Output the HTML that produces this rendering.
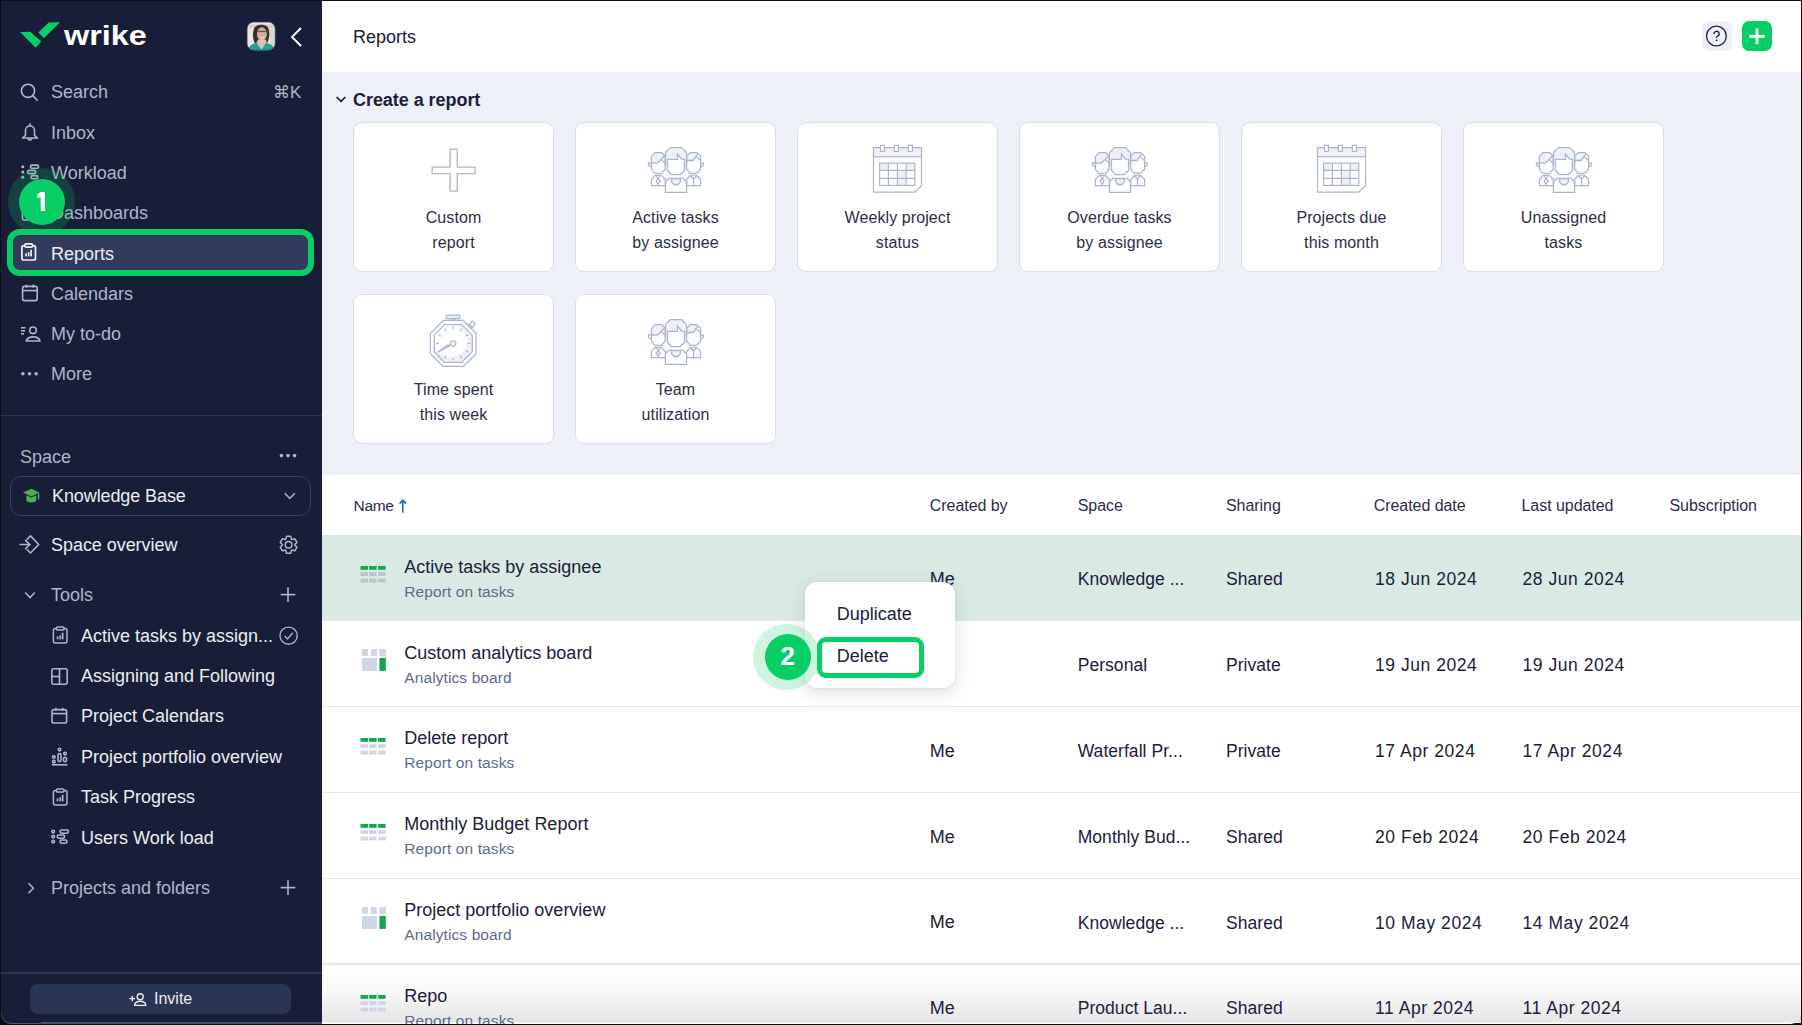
<!DOCTYPE html><html><head><meta charset="utf-8"><style>*{box-sizing:border-box;margin:0;padding:0}html,body{width:1802px;height:1025px;overflow:hidden;background:#0e0e10;font-family:"Liberation Sans",sans-serif}.t{position:absolute;white-space:nowrap}svg{display:block;overflow:visible}</style></head><body>
<div style="position:absolute;left:0px;top:0px;width:1802px;height:1025px;background:#0e0e10"></div>
<div style="position:absolute;left:1px;top:1px;width:321px;height:1023px;background:#181e37;border-bottom-left-radius:10px"></div>
<div style="position:absolute;left:322px;top:1px;width:1479px;height:1023px;background:#fff;border-bottom-right-radius:10px"></div>
<div style="position:absolute;left:1px;top:1013px;width:40px;height:11px;border-left:1px solid rgba(110,120,150,0.35);border-bottom:1.5px solid rgba(120,130,160,0.55);border-bottom-left-radius:10px"></div>
<div style="position:absolute;left:41px;top:1022px;width:281px;height:1.5px;background:rgba(120,130,160,0.5)"></div>
<div style="position:absolute;left:322px;top:72px;width:1479px;height:403px;background:#edf0f7"></div>
<svg style="position:absolute;left:18px;top:20px;" width="44" height="30" viewBox="18 20 44 30"><polygon points="20,32.1 30,31.7 41.2,41.5 35.4,47.5" fill="#08cf65"/><polygon points="38.3,32.5 48.7,22.5 60,22.3 44.1,38.3" fill="#08cf65"/><polygon points="30,31.7 41.2,41.5 35.4,47.5" fill="#08cf65"/></svg>
<div class="t" style="left:63.5px;top:18.54px;font-size:27px;line-height:34px;color:#ffffff;font-weight:700;transform:scaleX(1.2);transform-origin:0 0;">wrike</div>
<svg style="position:absolute;left:244px;top:19px;" width="34" height="34" viewBox="0 0 1025 1025"><defs><clipPath id="avc"><rect x="92" y="92" width="848" height="848" rx="200"/></clipPath></defs><g clip-path="url(#avc)"><rect x="0" y="0" width="1025" height="1025" fill="#e9e8e4"/><rect x="150" y="170" width="780" height="110" fill="#d8d0c0"/><rect x="780" y="300" width="120" height="560" fill="#d9d6d0"/><path d="M300 300 C330 140 700 120 740 300 C790 420 760 600 700 720 L330 740 C260 600 250 420 300 300 Z" fill="#3a2f2b"/><ellipse cx="540" cy="450" rx="150" ry="200" fill="#d4b09a"/><rect x="400" y="355" width="270" height="40" fill="#4a3d38" opacity="0.8"/><path d="M470 530 Q545 580 620 530 L610 560 Q545 600 480 560 Z" fill="#f3ece6"/><path d="M420 620 L660 620 L700 760 L540 930 L360 760 Z" fill="#dcbfae"/><path d="M120 1025 L150 860 C200 760 330 720 380 720 L530 930 L660 720 C760 730 880 780 920 900 L940 1025 Z" fill="#17a896"/></g><rect x="92" y="92" width="848" height="848" rx="200" fill="none" stroke="#33405e" stroke-width="22"/></svg>
<svg style="position:absolute;left:288px;top:26px;" width="16" height="22" viewBox="0 0 16 22"><polyline points="13,2 4,11 13,20" fill="none" stroke="#fff" stroke-width="2"/></svg>
<div style="position:absolute;left:8px;top:230px;width:306px;height:46px;background:#323b5c;border-radius:12px"></div>
<div class="t" style="left:51px;top:80.96px;font-size:18px;line-height:22px;color:#aeb6cb;">Search</div>
<div class="t" style="left:51px;top:121.66px;font-size:18px;line-height:22px;color:#aeb6cb;">Inbox</div>
<div class="t" style="left:51px;top:161.66px;font-size:18px;line-height:22px;color:#aeb6cb;">Workload</div>
<div class="t" style="left:51px;top:201.86px;font-size:18px;line-height:22px;color:#aeb6cb;">Dashboards</div>
<div class="t" style="left:51px;top:242.76px;font-size:18px;line-height:22px;color:#eceef3;">Reports</div>
<div class="t" style="left:51px;top:282.86px;font-size:18px;line-height:22px;color:#aeb6cb;">Calendars</div>
<div class="t" style="left:51px;top:323.36px;font-size:18px;line-height:22px;color:#aeb6cb;">My to-do</div>
<div class="t" style="left:51px;top:363.46px;font-size:18px;line-height:22px;color:#aeb6cb;">More</div>
<div class="t" style="left:273px;top:81.81px;font-size:17px;line-height:21px;color:#aeb6cb;">&#8984;K</div>
<svg style="position:absolute;left:16px;top:80px;" width="26" height="26" viewBox="16 80 26 26"><circle cx="28" cy="90.8" r="6.6" fill="none" stroke="#aeb6cb" stroke-width="1.6"/><line x1="32.8" y1="95.6" x2="37.3" y2="100.2" fill="none" stroke="#aeb6cb" stroke-width="1.6" stroke-linecap="round"/></svg>
<svg style="position:absolute;left:16px;top:118px;" width="28" height="28" viewBox="16 118 28 28"><path d="M30 125.9 a4.5 4.5 0 0 1 4.5 4.5 v4.9 l3 2.7 h-15 l3 -2.7 v-4.9 a4.5 4.5 0 0 1 4.5 -4.5 z M30 123.3 v2.6 M28.2 138.3 a1.8 1.7 0 0 0 3.6 0" fill="none" stroke="#aeb6cb" stroke-width="1.6" stroke-linejoin="round"/></svg>
<svg style="position:absolute;left:18px;top:160px;" width="26" height="24" viewBox="18 160 26 24"><circle cx="22.8" cy="166.7" r="1.5" fill="#aeb6cb"/><circle cx="22.8" cy="172" r="1.5" fill="#aeb6cb"/><circle cx="22.8" cy="177.2" r="1.5" fill="#aeb6cb"/><rect x="30.4" y="165.1" width="8.2" height="3.2" rx="1.6" fill="none" stroke="#aeb6cb" stroke-width="1.6" stroke-width="1.3"/><rect x="27.5" y="170.4" width="8.2" height="3.2" rx="1.6" fill="none" stroke="#aeb6cb" stroke-width="1.6" stroke-width="1.3"/><rect x="31" y="175.6" width="6.8" height="3.2" rx="1.6" fill="none" stroke="#aeb6cb" stroke-width="1.6" stroke-width="1.3"/></svg>
<svg style="position:absolute;left:18px;top:200px;" width="24" height="24" viewBox="18 200 24 24"><rect x="22.5" y="205" width="15" height="15" rx="1.5" fill="none" stroke="#aeb6cb" stroke-width="1.6"/><line x1="30" y1="205" x2="30" y2="220" fill="none" stroke="#aeb6cb" stroke-width="1.6"/><line x1="22.5" y1="212" x2="30" y2="212" fill="none" stroke="#aeb6cb" stroke-width="1.6"/></svg>
<svg style="position:absolute;left:21px;top:243px;" width="16" height="19" viewBox="0 0 16 19"><rect x="0.9" y="2.6" width="13.6" height="14.4" rx="2" fill="none" stroke="#f0f1f5" stroke-width="1.7"/><rect x="3.9" y="0.9" width="7.6" height="3.2" rx="1.2" fill="#323b5c" fill="none" stroke="#f0f1f5" stroke-width="1.7"/><rect x="4.2" y="10.4" width="1.7" height="3.0" fill="#f0f1f5"/><rect x="6.9" y="9.2" width="1.5" height="4.2" fill="#f0f1f5"/><rect x="9.2" y="6.8" width="1.8" height="6.6" fill="#f0f1f5"/></svg>
<svg style="position:absolute;left:20px;top:283px;" width="20" height="20" viewBox="20 283 20 20"><rect x="22.6" y="286.4" width="14.6" height="14.2" rx="1.8" fill="none" stroke="#aeb6cb" stroke-width="1.6"/><line x1="22.6" y1="290.6" x2="37.2" y2="290.6" fill="none" stroke="#aeb6cb" stroke-width="1.6"/><line x1="26.5" y1="284.6" x2="26.5" y2="287.6" fill="none" stroke="#aeb6cb" stroke-width="1.6"/><line x1="33.3" y1="284.6" x2="33.3" y2="287.6" fill="none" stroke="#aeb6cb" stroke-width="1.6"/></svg>
<svg style="position:absolute;left:19px;top:324px;" width="24" height="20" viewBox="19 324 24 20"><circle cx="33" cy="330.3" r="3.3" fill="none" stroke="#aeb6cb" stroke-width="1.6"/><path d="M26.2 341 a7 5 0 0 1 13.8 0 z" fill="none" stroke="#aeb6cb" stroke-width="1.6" stroke-linejoin="round"/><line x1="21" y1="327.8" x2="25.5" y2="327.8" fill="none" stroke="#aeb6cb" stroke-width="1.6" stroke-width="1.4"/><line x1="21" y1="330.8" x2="25" y2="330.8" fill="none" stroke="#aeb6cb" stroke-width="1.6" stroke-width="1.4"/><line x1="21" y1="333.8" x2="24" y2="333.8" fill="none" stroke="#aeb6cb" stroke-width="1.6" stroke-width="1.4"/></svg>
<svg style="position:absolute;left:19px;top:370px;" width="22" height="8" viewBox="19 370 22 8"><circle cx="22.9" cy="373.8" r="1.8" fill="#aeb6cb"/><circle cx="29.5" cy="373.8" r="1.8" fill="#aeb6cb"/><circle cx="36.1" cy="373.8" r="1.8" fill="#aeb6cb"/></svg>
<div style="position:absolute;left:1px;top:415px;width:321px;height:1px;background:#2c3552"></div>
<div class="t" style="left:20px;top:445.56px;font-size:18px;line-height:22px;color:#aeb6cb;">Space</div>
<svg style="position:absolute;left:277px;top:451px;" width="22" height="9" viewBox="277 451 22 9"><circle cx="281.5" cy="455.6" r="1.8" fill="#aeb6cb"/><circle cx="288" cy="455.6" r="1.8" fill="#aeb6cb"/><circle cx="294.5" cy="455.6" r="1.8" fill="#aeb6cb"/></svg>
<div style="position:absolute;left:10px;top:476px;width:301px;height:40px;border:1px solid #36405f;border-radius:11px"></div>
<svg style="position:absolute;left:22px;top:487px;" width="20" height="18" viewBox="22 487 20 18"><path d="M31.3 488.8 L39.5 492.6 L31.3 496.4 L23 492.6 Z" fill="#4caf50"/><path d="M26.3 495.2 v4.6 a5 2.6 0 0 0 10 0 v-4.6 l-5 2.4 z" fill="#4caf50"/><rect x="37.8" y="493.5" width="1.5" height="5.8" fill="#4caf50"/></svg>
<div class="t" style="left:52px;top:484.96px;font-size:18px;line-height:22px;color:#eceef3;letter-spacing:-0.1px;">Knowledge Base</div>
<svg style="position:absolute;left:282px;top:490px;" width="16" height="12" viewBox="282 490 16 12"><polyline points="284.8,493.2 289.8,498.4 294.8,493.2" fill="none" stroke="#aeb6cb" stroke-width="1.5"/></svg>
<svg style="position:absolute;left:18px;top:533px;" width="24" height="24" viewBox="18 533 24 24"><polyline points="27.3,539.1 30.5,535.9 38.8,544.5 30.5,553 27.3,549.8" fill="none" stroke="#aeb6cb" stroke-width="1.6" stroke-linejoin="round" stroke-linecap="round"/><line x1="20.1" y1="544.5" x2="29.6" y2="544.5" fill="none" stroke="#aeb6cb" stroke-width="1.6" stroke-linecap="round"/><polyline points="25.6,540.4 29.8,544.5 25.6,548.6" fill="none" stroke="#aeb6cb" stroke-width="1.6" stroke-linecap="round"/></svg>
<div class="t" style="left:51px;top:533.86px;font-size:18px;line-height:22px;color:#eceef3;letter-spacing:-0.05px;">Space overview</div>
<svg style="position:absolute;left:276px;top:532px;" width="26" height="26" viewBox="276 532 26 26"><polygon points="285.69,539.33 286.50,536.36 290.70,536.36 291.51,539.33 291.89,539.54 294.86,538.76 296.96,542.40 294.80,544.58 294.80,545.02 296.96,547.20 294.86,550.84 291.89,550.06 291.51,550.27 290.70,553.24 286.50,553.24 285.69,550.27 285.31,550.06 282.34,550.84 280.24,547.20 282.40,545.02 282.40,544.58 280.24,542.40 282.34,538.76 285.31,539.54" fill="none" stroke="#aeb6cb" stroke-width="1.5" stroke-linejoin="round"/><circle cx="288.6" cy="544.8" r="3.3" fill="none" stroke="#aeb6cb" stroke-width="1.5"/></svg>
<svg style="position:absolute;left:22px;top:588px;" width="16" height="14" viewBox="22 588 16 14"><polyline points="25.2,592.6 30,597.6 34.8,592.6" fill="none" stroke="#aeb6cb" stroke-width="1.5"/></svg>
<div class="t" style="left:51px;top:584.46px;font-size:18px;line-height:22px;color:#aeb6cb;">Tools</div>
<svg style="position:absolute;left:276px;top:582px;" width="26" height="26" viewBox="276 582 26 26"><line x1="280.7" y1="594.6" x2="295.3" y2="594.6" stroke="#aeb6cb" stroke-width="1.6"/><line x1="288" y1="587.3000000000001" x2="288" y2="601.9" stroke="#aeb6cb" stroke-width="1.6"/></svg>
<div class="t" style="left:81px;top:624.56px;font-size:18px;line-height:22px;color:#eceef3;">Active tasks by assign...</div>
<div class="t" style="left:81px;top:664.96px;font-size:18px;line-height:22px;color:#eceef3;">Assigning and Following</div>
<div class="t" style="left:81px;top:705.36px;font-size:18px;line-height:22px;color:#eceef3;">Project Calendars</div>
<div class="t" style="left:81px;top:745.66px;font-size:18px;line-height:22px;color:#eceef3;">Project portfolio overview</div>
<div class="t" style="left:81px;top:786.06px;font-size:18px;line-height:22px;color:#eceef3;">Task Progress</div>
<div class="t" style="left:81px;top:826.56px;font-size:18px;line-height:22px;color:#eceef3;">Users Work load</div>
<svg style="position:absolute;left:51.5px;top:626px;" width="17" height="19" viewBox="0 0 16 19"><rect x="0.9" y="2.6" width="13.6" height="14.4" rx="2" fill="none" stroke="#aeb6cb" stroke-width="1.5"/><rect x="3.9" y="0.9" width="7.6" height="3.2" rx="1.2" fill="#181e37" fill="none" stroke="#aeb6cb" stroke-width="1.5"/><rect x="4.2" y="10.4" width="1.7" height="3.0" fill="#aeb6cb"/><rect x="6.9" y="9.2" width="1.5" height="4.2" fill="#aeb6cb"/><rect x="9.2" y="6.8" width="1.8" height="6.6" fill="#aeb6cb"/></svg>
<svg style="position:absolute;left:50px;top:667px;" width="19" height="19" viewBox="50 667 19 19"><rect x="51.8" y="668.8" width="15.4" height="15.4" rx="1.6" fill="none" stroke="#aeb6cb" stroke-width="1.6"/><line x1="59.5" y1="668.8" x2="59.5" y2="684.2" fill="none" stroke="#aeb6cb" stroke-width="1.6"/><line x1="51.8" y1="676.5" x2="59.5" y2="676.5" fill="none" stroke="#aeb6cb" stroke-width="1.6"/></svg>
<svg style="position:absolute;left:50px;top:707px;" width="19" height="19" viewBox="50 707 19 19"><rect x="52" y="709.6" width="14.6" height="13.4" rx="1.8" fill="none" stroke="#aeb6cb" stroke-width="1.6"/><line x1="52" y1="713.6" x2="66.6" y2="713.6" fill="none" stroke="#aeb6cb" stroke-width="1.6"/><line x1="55.9" y1="707.8" x2="55.9" y2="710.8" fill="none" stroke="#aeb6cb" stroke-width="1.6"/><line x1="62.7" y1="707.8" x2="62.7" y2="710.8" fill="none" stroke="#aeb6cb" stroke-width="1.6"/></svg>
<svg style="position:absolute;left:50px;top:747px;" width="19" height="19" viewBox="50 747 19 19"><circle cx="53.8" cy="757" r="1.3" fill="none" stroke="#aeb6cb" stroke-width="1.6" stroke-width="1.2"/><circle cx="53.8" cy="761.6" r="1.3" fill="none" stroke="#aeb6cb" stroke-width="1.6" stroke-width="1.2"/><circle cx="59.5" cy="749.6" r="1.3" fill="none" stroke="#aeb6cb" stroke-width="1.6" stroke-width="1.2"/><rect x="58" y="753.6" width="3" height="8" rx="1.5" fill="none" stroke="#aeb6cb" stroke-width="1.6" stroke-width="1.2"/><circle cx="65" cy="753.6" r="1.3" fill="none" stroke="#aeb6cb" stroke-width="1.6" stroke-width="1.2"/><rect x="63.5" y="757.2" width="3" height="4.6" rx="1.5" fill="none" stroke="#aeb6cb" stroke-width="1.6" stroke-width="1.2"/><line x1="51.8" y1="764.8" x2="67.5" y2="764.8" fill="none" stroke="#aeb6cb" stroke-width="1.6" stroke-width="1.3"/></svg>
<svg style="position:absolute;left:51.5px;top:788px;" width="17" height="19" viewBox="0 0 16 19"><rect x="0.9" y="2.6" width="13.6" height="14.4" rx="2" fill="none" stroke="#aeb6cb" stroke-width="1.5"/><rect x="3.9" y="0.9" width="7.6" height="3.2" rx="1.2" fill="#181e37" fill="none" stroke="#aeb6cb" stroke-width="1.5"/><rect x="4.2" y="10.4" width="1.7" height="3.0" fill="#aeb6cb"/><rect x="6.9" y="9.2" width="1.5" height="4.2" fill="#aeb6cb"/><rect x="9.2" y="6.8" width="1.8" height="6.6" fill="#aeb6cb"/></svg>
<svg style="position:absolute;left:50px;top:828px;" width="22" height="20" viewBox="49 827 22 20"><circle cx="52.2" cy="830.6" r="1.3" fill="none" stroke="#aeb6cb" stroke-width="1.6" stroke-width="1.2"/><circle cx="52.2" cy="835.6" r="1.3" fill="none" stroke="#aeb6cb" stroke-width="1.6" stroke-width="1.2"/><circle cx="52.2" cy="840.6" r="1.3" fill="none" stroke="#aeb6cb" stroke-width="1.6" stroke-width="1.2"/><rect x="59" y="829" width="8.4" height="3.2" rx="1.6" fill="none" stroke="#aeb6cb" stroke-width="1.6" stroke-width="1.2"/><rect x="56.2" y="834" width="7.4" height="3.2" rx="1.6" fill="none" stroke="#aeb6cb" stroke-width="1.6" stroke-width="1.2"/><rect x="59" y="839" width="7" height="3.2" rx="1.6" fill="none" stroke="#aeb6cb" stroke-width="1.6" stroke-width="1.2"/></svg>
<svg style="position:absolute;left:277px;top:624px;" width="24" height="24" viewBox="277 624 24 24"><circle cx="288.6" cy="635.7" r="8.6" fill="none" stroke="#aeb6cb" stroke-width="1.4"/><polyline points="284.6,636 287.6,639 292.8,632.8" fill="none" stroke="#aeb6cb" stroke-width="1.4"/></svg>
<svg style="position:absolute;left:24px;top:880px;" width="14" height="16" viewBox="24 880 14 16"><polyline points="28.4,883.2 33.4,888.2 28.4,893.2" fill="none" stroke="#aeb6cb" stroke-width="1.5"/></svg>
<div class="t" style="left:51px;top:877.16px;font-size:18px;line-height:22px;color:#aeb6cb;">Projects and folders</div>
<svg style="position:absolute;left:276px;top:875px;" width="26" height="26" viewBox="276 875 26 26"><line x1="280.7" y1="887.6" x2="295.3" y2="887.6" stroke="#aeb6cb" stroke-width="1.6"/><line x1="288" y1="880.3000000000001" x2="288" y2="894.9" stroke="#aeb6cb" stroke-width="1.6"/></svg>
<div style="position:absolute;left:1px;top:972px;width:321px;height:1.5px;background:#2c3552"></div>
<div style="position:absolute;left:30px;top:984px;width:261px;height:30px;background:#2a3453;border-radius:8px"></div>
<svg style="position:absolute;left:127px;top:990px;" width="22" height="18" viewBox="127 990 22 18"><line x1="129.6" y1="998.6" x2="135" y2="998.6" stroke="#e8eaf0" stroke-width="1.4"/><line x1="132.3" y1="995.9" x2="132.3" y2="1001.3" stroke="#e8eaf0" stroke-width="1.4"/><circle cx="140.2" cy="996.8" r="3" fill="none" stroke="#e8eaf0" stroke-width="1.4"/><path d="M134.6 1005.4 a5.6 4.2 0 0 1 11.2 0 z" fill="none" stroke="#e8eaf0" stroke-width="1.4" stroke-linejoin="round"/></svg>
<div class="t" style="left:154px;top:988.85px;font-size:16px;line-height:20px;color:#eceef3;">Invite</div>
<div style="position:absolute;left:7px;top:229px;width:307px;height:47px;border:6px solid #08cf65;border-radius:13px"></div>
<div style="position:absolute;left:7.899999999999999px;top:168.10000000000002px;width:67.4px;height:67.4px;border-radius:50%;background:rgba(8,207,101,0.2)"></div>
<div style="position:absolute;left:18.7px;top:178.5px;width:46.6px;height:46.6px;border-radius:50%;background:#08cf65"></div>
<svg style="position:absolute;left:30px;top:185px;" width="25" height="30" viewBox="30 185 25 30"><polygon points="40.9,192.1 44.9,192.1 44.9,211.1 40.7,211.1 40.7,197.3 37.2,198.3 37.2,194.6" fill="#fff"/></svg>
<div class="t" style="left:353px;top:25.96px;font-size:18px;line-height:22px;color:#1b2038;">Reports</div>
<div style="position:absolute;left:1701.5px;top:21px;width:30px;height:30px;background:#edf0f7;border-radius:7px"></div>
<svg style="position:absolute;left:1704px;top:24px;" width="25" height="25" viewBox="1704 24 25 25"><circle cx="1716.4" cy="36" r="9.9" fill="none" stroke="#1b2038" stroke-width="1.3"/><path d="M1714.1 33.9 a2.5 2.5 0 1 1 3.7 2.1 c-.9 .5 -1.3 .9 -1.3 2" fill="none" stroke="#1b2038" stroke-width="1.35"/><circle cx="1716.5" cy="40.3" r="0.85" fill="#1b2038"/></svg>
<div style="position:absolute;left:1742px;top:21px;width:30px;height:30px;background:#08cf65;border-radius:7px"></div>
<svg style="position:absolute;left:1742px;top:21px;" width="30" height="30" viewBox="1742 21 30 30"><line x1="1749.3" y1="36.3" x2="1764.7" y2="36.3" stroke="#fff" stroke-width="2.8"/><line x1="1757" y1="28.599999999999998" x2="1757" y2="44.0" stroke="#fff" stroke-width="2.8"/></svg>
<svg style="position:absolute;left:334px;top:94px;" width="14" height="10" viewBox="334 94 14 10"><polyline points="336.6,97 341,101.4 345.4,97" fill="none" stroke="#1b2038" stroke-width="1.7"/></svg>
<div class="t" style="left:353px;top:88.56px;font-size:18px;line-height:22px;color:#1b2038;font-weight:700;letter-spacing:-0.05px;">Create a report</div>
<div style="position:absolute;left:353px;top:122px;width:201px;height:150px;background:#fff;border:1px solid #d9dee9;border-radius:9px"></div>
<div class="t" style="left:353px;top:207.65px;font-size:16px;line-height:20px;color:#2a2f45;letter-spacing:0.1px;width:201px;text-align:center;">Custom</div>
<div class="t" style="left:353px;top:233.05px;font-size:16px;line-height:20px;color:#2a2f45;letter-spacing:0.1px;width:201px;text-align:center;">report</div>
<svg style="position:absolute;left:353px;top:122px;" width="201" height="100" viewBox="353 122 201 100"><polygon points="432.2,167.2 450.09999999999997,167.2 450.09999999999997,149.2 457.3,149.2 457.3,167.2 475.09999999999997,167.2 475.09999999999997,173.7 457.3,173.7 457.3,191.2 450.09999999999997,191.2 450.09999999999997,173.7 432.2,173.7" fill="none" stroke="#aab5cc" stroke-width="1.3"/></svg>
<div style="position:absolute;left:575px;top:122px;width:201px;height:150px;background:#fff;border:1px solid #d9dee9;border-radius:9px"></div>
<div class="t" style="left:575px;top:207.65px;font-size:16px;line-height:20px;color:#2a2f45;letter-spacing:0.1px;width:201px;text-align:center;">Active tasks</div>
<div class="t" style="left:575px;top:233.05px;font-size:16px;line-height:20px;color:#2a2f45;letter-spacing:0.1px;width:201px;text-align:center;">by assignee</div>
<svg style="position:absolute;left:575px;top:122px;" width="201" height="100" viewBox="575 122 201 100"><g transform="translate(640,140) scale(0.05853,0.05854)"><polygon points="195,280 255,215 370,215 420,265 300,395 195,395" fill="#edf0f7"/><polygon points="195,280 255,215 370,215 430,275 430,500 370,570 255,570 195,500" fill="none" stroke="#aab5cc" stroke-width="22" stroke-linejoin="miter"/><polyline points="195,395 300,395 420,268" fill="none" stroke="#aab5cc" stroke-width="22" stroke-linejoin="miter"/><line x1="370" y1="340" x2="430" y2="395" stroke="#aab5cc" stroke-width="22" stroke-linejoin="miter"/><polyline points="195,390 145,390 145,430 185,460" fill="none" stroke="#aab5cc" stroke-width="22" stroke-linejoin="miter"/><polygon points="795,280 860,215 970,215 990,240 905,350 795,350" fill="#edf0f7"/><polygon points="795,280 860,215 970,215 1035,280 1035,500 965,570 860,570 795,500" fill="none" stroke="#aab5cc" stroke-width="22" stroke-linejoin="miter"/><polyline points="795,350 905,350 985,245" fill="none" stroke="#aab5cc" stroke-width="22" stroke-linejoin="miter"/><line x1="965" y1="295" x2="1035" y2="350" stroke="#aab5cc" stroke-width="22" stroke-linejoin="miter"/><polyline points="1040,390 1080,390 1080,430 1040,460" fill="none" stroke="#aab5cc" stroke-width="22" stroke-linejoin="miter"/><polygon points="435,215 520,130 710,130 795,215 795,440 435,440" fill="#edf0f7"/><polygon points="470,330 640,330 640,240 710,325 760,330 760,520 690,590 535,590 470,520" fill="#fff" stroke="#aab5cc" stroke-width="22" stroke-linejoin="miter"/><polyline points="435,440 435,215 520,130 710,130 795,215 795,440" fill="none" stroke="#aab5cc" stroke-width="22" stroke-linejoin="miter"/><polygon points="195,780 195,670 260,605 365,605 435,680 435,780" fill="#fff" stroke="#aab5cc" stroke-width="22" stroke-linejoin="miter"/><polyline points="265,605 310,655 355,605" fill="none" stroke="#aab5cc" stroke-width="22" stroke-linejoin="miter" stroke-width="18"/><polygon points="310,655 345,705 310,750 275,705" fill="none" stroke="#aab5cc" stroke-width="22" stroke-linejoin="miter" stroke-width="18"/><line x1="310" y1="750" x2="310" y2="780" stroke="#aab5cc" stroke-width="22" stroke-linejoin="miter" stroke-width="18"/><polygon points="795,780 795,680 860,605 965,605 1035,670 1035,780" fill="#fff" stroke="#aab5cc" stroke-width="22" stroke-linejoin="miter"/><polygon points="860,610 965,610 915,670" fill="#edf0f7"/><polyline points="860,610 915,670 965,610" fill="none" stroke="#aab5cc" stroke-width="22" stroke-linejoin="miter" stroke-width="18"/><line x1="915" y1="670" x2="915" y2="775" stroke="#aab5cc" stroke-width="22" stroke-linejoin="miter" stroke-width="18"/><polygon points="435,895 435,715 490,655 735,655 795,715 795,895" fill="#fff" stroke="#aab5cc" stroke-width="22" stroke-linejoin="miter"/><polygon points="540,660 540,715 580,760 650,760 690,715 690,660" fill="#edf0f7" stroke="#aab5cc" stroke-width="22" stroke-linejoin="miter"/></g></svg>
<div style="position:absolute;left:797px;top:122px;width:201px;height:150px;background:#fff;border:1px solid #d9dee9;border-radius:9px"></div>
<div class="t" style="left:797px;top:207.65px;font-size:16px;line-height:20px;color:#2a2f45;letter-spacing:0.1px;width:201px;text-align:center;">Weekly project</div>
<div class="t" style="left:797px;top:233.05px;font-size:16px;line-height:20px;color:#2a2f45;letter-spacing:0.1px;width:201px;text-align:center;">status</div>
<svg style="position:absolute;left:797px;top:122px;" width="201" height="100" viewBox="797 122 201 100"><g transform="translate(865,138) scale(0.05856,0.05854)"><polygon points="145,165 965,165 965,815 850,925 145,925" fill="#fff" stroke="#aab5cc" stroke-width="20"/><rect x="145" y="165" width="820" height="155" fill="#edf0f7" stroke="#aab5cc" stroke-width="20"/><rect x="265" y="125" width="65" height="105" fill="#fff" stroke="#aab5cc" stroke-width="20"/><rect x="502" y="125" width="68" height="105" fill="#fff" stroke="#aab5cc" stroke-width="20"/><rect x="740" y="125" width="70" height="105" fill="#fff" stroke="#aab5cc" stroke-width="20"/><rect x="250" y="430" width="150" height="123" fill="#edf0f7"/><rect x="703" y="430" width="147" height="123" fill="#edf0f7"/><rect x="553" y="553" width="150" height="257" fill="#edf0f7"/><rect x="250" y="430" width="600" height="380" fill="none" stroke="#aab5cc" stroke-width="20"/><line x1="400" y1="430" x2="400" y2="810" stroke="#aab5cc" stroke-width="20"/><line x1="553" y1="430" x2="553" y2="810" stroke="#aab5cc" stroke-width="20"/><line x1="703" y1="430" x2="703" y2="810" stroke="#aab5cc" stroke-width="20"/><line x1="250" y1="553" x2="850" y2="553" stroke="#aab5cc" stroke-width="20"/><line x1="250" y1="690" x2="850" y2="690" stroke="#aab5cc" stroke-width="20"/></g></svg>
<div style="position:absolute;left:1019px;top:122px;width:201px;height:150px;background:#fff;border:1px solid #d9dee9;border-radius:9px"></div>
<div class="t" style="left:1019px;top:207.65px;font-size:16px;line-height:20px;color:#2a2f45;letter-spacing:0.1px;width:201px;text-align:center;">Overdue tasks</div>
<div class="t" style="left:1019px;top:233.05px;font-size:16px;line-height:20px;color:#2a2f45;letter-spacing:0.1px;width:201px;text-align:center;">by assignee</div>
<svg style="position:absolute;left:1019px;top:122px;" width="201" height="100" viewBox="1019 122 201 100"><g transform="translate(1084,140) scale(0.05853,0.05854)"><polygon points="195,280 255,215 370,215 420,265 300,395 195,395" fill="#edf0f7"/><polygon points="195,280 255,215 370,215 430,275 430,500 370,570 255,570 195,500" fill="none" stroke="#aab5cc" stroke-width="22" stroke-linejoin="miter"/><polyline points="195,395 300,395 420,268" fill="none" stroke="#aab5cc" stroke-width="22" stroke-linejoin="miter"/><line x1="370" y1="340" x2="430" y2="395" stroke="#aab5cc" stroke-width="22" stroke-linejoin="miter"/><polyline points="195,390 145,390 145,430 185,460" fill="none" stroke="#aab5cc" stroke-width="22" stroke-linejoin="miter"/><polygon points="795,280 860,215 970,215 990,240 905,350 795,350" fill="#edf0f7"/><polygon points="795,280 860,215 970,215 1035,280 1035,500 965,570 860,570 795,500" fill="none" stroke="#aab5cc" stroke-width="22" stroke-linejoin="miter"/><polyline points="795,350 905,350 985,245" fill="none" stroke="#aab5cc" stroke-width="22" stroke-linejoin="miter"/><line x1="965" y1="295" x2="1035" y2="350" stroke="#aab5cc" stroke-width="22" stroke-linejoin="miter"/><polyline points="1040,390 1080,390 1080,430 1040,460" fill="none" stroke="#aab5cc" stroke-width="22" stroke-linejoin="miter"/><polygon points="435,215 520,130 710,130 795,215 795,440 435,440" fill="#edf0f7"/><polygon points="470,330 640,330 640,240 710,325 760,330 760,520 690,590 535,590 470,520" fill="#fff" stroke="#aab5cc" stroke-width="22" stroke-linejoin="miter"/><polyline points="435,440 435,215 520,130 710,130 795,215 795,440" fill="none" stroke="#aab5cc" stroke-width="22" stroke-linejoin="miter"/><polygon points="195,780 195,670 260,605 365,605 435,680 435,780" fill="#fff" stroke="#aab5cc" stroke-width="22" stroke-linejoin="miter"/><polyline points="265,605 310,655 355,605" fill="none" stroke="#aab5cc" stroke-width="22" stroke-linejoin="miter" stroke-width="18"/><polygon points="310,655 345,705 310,750 275,705" fill="none" stroke="#aab5cc" stroke-width="22" stroke-linejoin="miter" stroke-width="18"/><line x1="310" y1="750" x2="310" y2="780" stroke="#aab5cc" stroke-width="22" stroke-linejoin="miter" stroke-width="18"/><polygon points="795,780 795,680 860,605 965,605 1035,670 1035,780" fill="#fff" stroke="#aab5cc" stroke-width="22" stroke-linejoin="miter"/><polygon points="860,610 965,610 915,670" fill="#edf0f7"/><polyline points="860,610 915,670 965,610" fill="none" stroke="#aab5cc" stroke-width="22" stroke-linejoin="miter" stroke-width="18"/><line x1="915" y1="670" x2="915" y2="775" stroke="#aab5cc" stroke-width="22" stroke-linejoin="miter" stroke-width="18"/><polygon points="435,895 435,715 490,655 735,655 795,715 795,895" fill="#fff" stroke="#aab5cc" stroke-width="22" stroke-linejoin="miter"/><polygon points="540,660 540,715 580,760 650,760 690,715 690,660" fill="#edf0f7" stroke="#aab5cc" stroke-width="22" stroke-linejoin="miter"/></g></svg>
<div style="position:absolute;left:1241px;top:122px;width:201px;height:150px;background:#fff;border:1px solid #d9dee9;border-radius:9px"></div>
<div class="t" style="left:1241px;top:207.65px;font-size:16px;line-height:20px;color:#2a2f45;letter-spacing:0.1px;width:201px;text-align:center;">Projects due</div>
<div class="t" style="left:1241px;top:233.05px;font-size:16px;line-height:20px;color:#2a2f45;letter-spacing:0.1px;width:201px;text-align:center;">this month</div>
<svg style="position:absolute;left:1241px;top:122px;" width="201" height="100" viewBox="1241 122 201 100"><g transform="translate(1309,138) scale(0.05856,0.05854)"><polygon points="145,165 965,165 965,815 850,925 145,925" fill="#fff" stroke="#aab5cc" stroke-width="20"/><rect x="145" y="165" width="820" height="155" fill="#edf0f7" stroke="#aab5cc" stroke-width="20"/><rect x="265" y="125" width="65" height="105" fill="#fff" stroke="#aab5cc" stroke-width="20"/><rect x="502" y="125" width="68" height="105" fill="#fff" stroke="#aab5cc" stroke-width="20"/><rect x="740" y="125" width="70" height="105" fill="#fff" stroke="#aab5cc" stroke-width="20"/><rect x="250" y="430" width="150" height="123" fill="#edf0f7"/><rect x="703" y="430" width="147" height="123" fill="#edf0f7"/><rect x="553" y="553" width="150" height="257" fill="#edf0f7"/><rect x="250" y="430" width="600" height="380" fill="none" stroke="#aab5cc" stroke-width="20"/><line x1="400" y1="430" x2="400" y2="810" stroke="#aab5cc" stroke-width="20"/><line x1="553" y1="430" x2="553" y2="810" stroke="#aab5cc" stroke-width="20"/><line x1="703" y1="430" x2="703" y2="810" stroke="#aab5cc" stroke-width="20"/><line x1="250" y1="553" x2="850" y2="553" stroke="#aab5cc" stroke-width="20"/><line x1="250" y1="690" x2="850" y2="690" stroke="#aab5cc" stroke-width="20"/></g></svg>
<div style="position:absolute;left:1463px;top:122px;width:201px;height:150px;background:#fff;border:1px solid #d9dee9;border-radius:9px"></div>
<div class="t" style="left:1463px;top:207.65px;font-size:16px;line-height:20px;color:#2a2f45;letter-spacing:0.1px;width:201px;text-align:center;">Unassigned</div>
<div class="t" style="left:1463px;top:233.05px;font-size:16px;line-height:20px;color:#2a2f45;letter-spacing:0.1px;width:201px;text-align:center;">tasks</div>
<svg style="position:absolute;left:1463px;top:122px;" width="201" height="100" viewBox="1463 122 201 100"><g transform="translate(1528,140) scale(0.05853,0.05854)"><polygon points="195,280 255,215 370,215 420,265 300,395 195,395" fill="#edf0f7"/><polygon points="195,280 255,215 370,215 430,275 430,500 370,570 255,570 195,500" fill="none" stroke="#aab5cc" stroke-width="22" stroke-linejoin="miter"/><polyline points="195,395 300,395 420,268" fill="none" stroke="#aab5cc" stroke-width="22" stroke-linejoin="miter"/><line x1="370" y1="340" x2="430" y2="395" stroke="#aab5cc" stroke-width="22" stroke-linejoin="miter"/><polyline points="195,390 145,390 145,430 185,460" fill="none" stroke="#aab5cc" stroke-width="22" stroke-linejoin="miter"/><polygon points="795,280 860,215 970,215 990,240 905,350 795,350" fill="#edf0f7"/><polygon points="795,280 860,215 970,215 1035,280 1035,500 965,570 860,570 795,500" fill="none" stroke="#aab5cc" stroke-width="22" stroke-linejoin="miter"/><polyline points="795,350 905,350 985,245" fill="none" stroke="#aab5cc" stroke-width="22" stroke-linejoin="miter"/><line x1="965" y1="295" x2="1035" y2="350" stroke="#aab5cc" stroke-width="22" stroke-linejoin="miter"/><polyline points="1040,390 1080,390 1080,430 1040,460" fill="none" stroke="#aab5cc" stroke-width="22" stroke-linejoin="miter"/><polygon points="435,215 520,130 710,130 795,215 795,440 435,440" fill="#edf0f7"/><polygon points="470,330 640,330 640,240 710,325 760,330 760,520 690,590 535,590 470,520" fill="#fff" stroke="#aab5cc" stroke-width="22" stroke-linejoin="miter"/><polyline points="435,440 435,215 520,130 710,130 795,215 795,440" fill="none" stroke="#aab5cc" stroke-width="22" stroke-linejoin="miter"/><polygon points="195,780 195,670 260,605 365,605 435,680 435,780" fill="#fff" stroke="#aab5cc" stroke-width="22" stroke-linejoin="miter"/><polyline points="265,605 310,655 355,605" fill="none" stroke="#aab5cc" stroke-width="22" stroke-linejoin="miter" stroke-width="18"/><polygon points="310,655 345,705 310,750 275,705" fill="none" stroke="#aab5cc" stroke-width="22" stroke-linejoin="miter" stroke-width="18"/><line x1="310" y1="750" x2="310" y2="780" stroke="#aab5cc" stroke-width="22" stroke-linejoin="miter" stroke-width="18"/><polygon points="795,780 795,680 860,605 965,605 1035,670 1035,780" fill="#fff" stroke="#aab5cc" stroke-width="22" stroke-linejoin="miter"/><polygon points="860,610 965,610 915,670" fill="#edf0f7"/><polyline points="860,610 915,670 965,610" fill="none" stroke="#aab5cc" stroke-width="22" stroke-linejoin="miter" stroke-width="18"/><line x1="915" y1="670" x2="915" y2="775" stroke="#aab5cc" stroke-width="22" stroke-linejoin="miter" stroke-width="18"/><polygon points="435,895 435,715 490,655 735,655 795,715 795,895" fill="#fff" stroke="#aab5cc" stroke-width="22" stroke-linejoin="miter"/><polygon points="540,660 540,715 580,760 650,760 690,715 690,660" fill="#edf0f7" stroke="#aab5cc" stroke-width="22" stroke-linejoin="miter"/></g></svg>
<div style="position:absolute;left:353px;top:294px;width:201px;height:150px;background:#fff;border:1px solid #d9dee9;border-radius:9px"></div>
<div class="t" style="left:353px;top:379.65px;font-size:16px;line-height:20px;color:#2a2f45;letter-spacing:0.1px;width:201px;text-align:center;">Time spent</div>
<div class="t" style="left:353px;top:405.05px;font-size:16px;line-height:20px;color:#2a2f45;letter-spacing:0.1px;width:201px;text-align:center;">this week</div>
<svg style="position:absolute;left:353px;top:294px;" width="201" height="100" viewBox="353 294 201 100"><defs><clipPath id="swc"><polygon points="360,265 635,265 805,435 805,700 635,870 360,870 195,700 195,435"/></clipPath></defs><g transform="translate(422,308) scale(0.06244,0.06244)"><rect x="390" y="115" width="215" height="55" fill="#edf0f7" stroke="#aab5cc" stroke-width="20"/><rect x="475" y="170" width="50" height="30" fill="#fff" stroke="#aab5cc" stroke-width="20" stroke-width="14"/><g transform="rotate(45 805 262)"><rect x="770" y="225" width="70" height="75" fill="#fff" stroke="#aab5cc" stroke-width="20" stroke-width="16"/></g><polygon points="340,200 660,200 865,405 865,735 660,935 340,935 135,735 135,405" fill="#fff" stroke="#aab5cc" stroke-width="20"/><polygon points="360,265 635,265 805,435 805,700 635,870 360,870 195,700 195,435" fill="#edf0f7"/><circle cx="458" cy="522" r="265" fill="#fff" clip-path="url(#swc)"/><polygon points="360,265 635,265 805,435 805,700 635,870 360,870 195,700 195,435" fill="none" stroke="#aab5cc" stroke-width="20"/><line x1="500.0" y1="339.0" x2="500.0" y2="292.0" stroke="#aab5cc" stroke-width="20" stroke-width="17"/><line x1="614.0" y1="369.5" x2="637.5" y2="328.8" stroke="#aab5cc" stroke-width="20" stroke-width="17"/><line x1="697.5" y1="453.0" x2="738.2" y2="429.5" stroke="#aab5cc" stroke-width="20" stroke-width="17"/><line x1="728.0" y1="567.0" x2="775.0" y2="567.0" stroke="#aab5cc" stroke-width="20" stroke-width="17"/><line x1="697.5" y1="681.0" x2="738.2" y2="704.5" stroke="#aab5cc" stroke-width="20" stroke-width="17"/><line x1="614.0" y1="764.5" x2="637.5" y2="805.2" stroke="#aab5cc" stroke-width="20" stroke-width="17"/><line x1="500.0" y1="795.0" x2="500.0" y2="842.0" stroke="#aab5cc" stroke-width="20" stroke-width="17"/><line x1="386.0" y1="764.5" x2="362.5" y2="805.2" stroke="#aab5cc" stroke-width="20" stroke-width="17"/><line x1="302.5" y1="681.0" x2="261.8" y2="704.5" stroke="#aab5cc" stroke-width="20" stroke-width="17"/><line x1="272.0" y1="567.0" x2="225.0" y2="567.0" stroke="#aab5cc" stroke-width="20" stroke-width="17"/><line x1="302.5" y1="453.0" x2="261.8" y2="429.5" stroke="#aab5cc" stroke-width="20" stroke-width="17"/><line x1="386.0" y1="369.5" x2="362.5" y2="328.8" stroke="#aab5cc" stroke-width="20" stroke-width="17"/><polygon points="470,590 262,702 400,600" fill="#edf0f7" stroke="#aab5cc" stroke-width="20" stroke-width="14" stroke-linejoin="round"/><circle cx="500" cy="567" r="42" fill="#fff" stroke="#aab5cc" stroke-width="20" stroke-width="16"/></g></svg>
<div style="position:absolute;left:575px;top:294px;width:201px;height:150px;background:#fff;border:1px solid #d9dee9;border-radius:9px"></div>
<div class="t" style="left:575px;top:379.65px;font-size:16px;line-height:20px;color:#2a2f45;letter-spacing:0.1px;width:201px;text-align:center;">Team</div>
<div class="t" style="left:575px;top:405.05px;font-size:16px;line-height:20px;color:#2a2f45;letter-spacing:0.1px;width:201px;text-align:center;">utilization</div>
<svg style="position:absolute;left:575px;top:294px;" width="201" height="100" viewBox="575 294 201 100"><g transform="translate(640,312) scale(0.05853,0.05854)"><polygon points="195,280 255,215 370,215 420,265 300,395 195,395" fill="#edf0f7"/><polygon points="195,280 255,215 370,215 430,275 430,500 370,570 255,570 195,500" fill="none" stroke="#aab5cc" stroke-width="22" stroke-linejoin="miter"/><polyline points="195,395 300,395 420,268" fill="none" stroke="#aab5cc" stroke-width="22" stroke-linejoin="miter"/><line x1="370" y1="340" x2="430" y2="395" stroke="#aab5cc" stroke-width="22" stroke-linejoin="miter"/><polyline points="195,390 145,390 145,430 185,460" fill="none" stroke="#aab5cc" stroke-width="22" stroke-linejoin="miter"/><polygon points="795,280 860,215 970,215 990,240 905,350 795,350" fill="#edf0f7"/><polygon points="795,280 860,215 970,215 1035,280 1035,500 965,570 860,570 795,500" fill="none" stroke="#aab5cc" stroke-width="22" stroke-linejoin="miter"/><polyline points="795,350 905,350 985,245" fill="none" stroke="#aab5cc" stroke-width="22" stroke-linejoin="miter"/><line x1="965" y1="295" x2="1035" y2="350" stroke="#aab5cc" stroke-width="22" stroke-linejoin="miter"/><polyline points="1040,390 1080,390 1080,430 1040,460" fill="none" stroke="#aab5cc" stroke-width="22" stroke-linejoin="miter"/><polygon points="435,215 520,130 710,130 795,215 795,440 435,440" fill="#edf0f7"/><polygon points="470,330 640,330 640,240 710,325 760,330 760,520 690,590 535,590 470,520" fill="#fff" stroke="#aab5cc" stroke-width="22" stroke-linejoin="miter"/><polyline points="435,440 435,215 520,130 710,130 795,215 795,440" fill="none" stroke="#aab5cc" stroke-width="22" stroke-linejoin="miter"/><polygon points="195,780 195,670 260,605 365,605 435,680 435,780" fill="#fff" stroke="#aab5cc" stroke-width="22" stroke-linejoin="miter"/><polyline points="265,605 310,655 355,605" fill="none" stroke="#aab5cc" stroke-width="22" stroke-linejoin="miter" stroke-width="18"/><polygon points="310,655 345,705 310,750 275,705" fill="none" stroke="#aab5cc" stroke-width="22" stroke-linejoin="miter" stroke-width="18"/><line x1="310" y1="750" x2="310" y2="780" stroke="#aab5cc" stroke-width="22" stroke-linejoin="miter" stroke-width="18"/><polygon points="795,780 795,680 860,605 965,605 1035,670 1035,780" fill="#fff" stroke="#aab5cc" stroke-width="22" stroke-linejoin="miter"/><polygon points="860,610 965,610 915,670" fill="#edf0f7"/><polyline points="860,610 915,670 965,610" fill="none" stroke="#aab5cc" stroke-width="22" stroke-linejoin="miter" stroke-width="18"/><line x1="915" y1="670" x2="915" y2="775" stroke="#aab5cc" stroke-width="22" stroke-linejoin="miter" stroke-width="18"/><polygon points="435,895 435,715 490,655 735,655 795,715 795,895" fill="#fff" stroke="#aab5cc" stroke-width="22" stroke-linejoin="miter"/><polygon points="540,660 540,715 580,760 650,760 690,715 690,660" fill="#edf0f7" stroke="#aab5cc" stroke-width="22" stroke-linejoin="miter"/></g></svg>
<div class="t" style="left:353.5px;top:496.33px;font-size:15.5px;line-height:19px;color:#2a2f45;letter-spacing:-0.3px;">Name</div>
<svg style="position:absolute;left:395.5px;top:497px;" width="12" height="18" viewBox="396 497 12 18"><line x1="402.8" y1="501" x2="402.8" y2="512.7" stroke="#1565d8" stroke-width="1.6"/><polyline points="399.6,503.6 402.8,500.2 406,503.6" fill="none" stroke="#1565d8" stroke-width="1.6"/></svg>
<div class="t" style="left:929.8px;top:495.75px;font-size:16px;line-height:20px;color:#2a2f45;letter-spacing:-0.05px;">Created by</div>
<div class="t" style="left:1077.7px;top:495.75px;font-size:16px;line-height:20px;color:#2a2f45;letter-spacing:-0.05px;">Space</div>
<div class="t" style="left:1226px;top:495.75px;font-size:16px;line-height:20px;color:#2a2f45;letter-spacing:-0.05px;">Sharing</div>
<div class="t" style="left:1373.7px;top:495.75px;font-size:16px;line-height:20px;color:#2a2f45;letter-spacing:-0.05px;">Created date</div>
<div class="t" style="left:1521.5px;top:495.75px;font-size:16px;line-height:20px;color:#2a2f45;letter-spacing:-0.05px;">Last updated</div>
<div class="t" style="left:1669.5px;top:495.75px;font-size:16px;line-height:20px;color:#2a2f45;letter-spacing:-0.05px;">Subscription</div>
<div style="position:absolute;left:322px;top:965px;width:1479px;height:58px;background:linear-gradient(to bottom,rgba(228,228,230,0) 0%,rgba(228,228,230,0.25) 45%,rgba(228,228,230,0.7) 80%,rgba(228,228,230,1) 100%)"></div>
<div style="position:absolute;left:322px;top:1022px;width:1479px;height:1px;background:rgba(255,255,255,0.6)"></div>
<div style="position:absolute;left:322px;top:535px;width:1479px;height:86px;background:#d9eae5"></div>
<div class="t" style="left:404.3px;top:555.66px;font-size:18px;line-height:22px;color:#1b2038;">Active tasks by assignee</div>
<div class="t" style="left:404.3px;top:581.73px;font-size:15.5px;line-height:19px;color:#5b6b8c;letter-spacing:0.1px;">Report on tasks</div>
<svg style="position:absolute;left:355px;top:560.0px;" width="36" height="30" viewBox="355 560.0 36 30"><rect x="360.5" y="566.0" width="7.5" height="3.8" fill="#0fa84e"/><rect x="369.1" y="566.0" width="7.5" height="3.8" fill="#0fa84e"/><rect x="378.1" y="566.0" width="7.5" height="3.8" fill="#0fa84e"/><rect x="360.5" y="572.2" width="7.5" height="3.8" fill="#b7c6cd"/><rect x="369.1" y="572.2" width="7.5" height="3.8" fill="#b7c6cd"/><rect x="378.1" y="572.2" width="7.5" height="3.8" fill="#b7c6cd"/><rect x="360.5" y="578.7" width="7.5" height="3.8" fill="#b7c6cd"/><rect x="369.1" y="578.7" width="7.5" height="3.8" fill="#b7c6cd"/><rect x="378.1" y="578.7" width="7.5" height="3.8" fill="#b7c6cd"/></svg>
<div class="t" style="left:929.8px;top:567.86px;font-size:18px;line-height:22px;color:#1b2038;letter-spacing:-0.1px;">Me</div>
<div class="t" style="left:1077.7px;top:568.03px;font-size:17.5px;line-height:22px;color:#1b2038;letter-spacing:0.05px;">Knowledge ...</div>
<div class="t" style="left:1226px;top:568.03px;font-size:17.5px;line-height:22px;color:#1b2038;letter-spacing:0.05px;">Shared</div>
<div class="t" style="left:1375px;top:568.03px;font-size:17.5px;line-height:22px;color:#1b2038;letter-spacing:0.55px;">18 Jun 2024</div>
<div class="t" style="left:1522.5px;top:568.03px;font-size:17.5px;line-height:22px;color:#1b2038;letter-spacing:0.55px;">28 Jun 2024</div>
<div style="position:absolute;left:322px;top:619.88px;width:1479px;height:1.5px;background:#e2e6ee"></div>
<div class="t" style="left:404.3px;top:641.54px;font-size:18px;line-height:22px;color:#1b2038;">Custom analytics board</div>
<div class="t" style="left:404.3px;top:667.61px;font-size:15.5px;line-height:19px;color:#5b6b8c;letter-spacing:0.1px;">Analytics board</div>
<svg style="position:absolute;left:355px;top:645.88px;" width="36" height="30" viewBox="355 645.88 36 30"><rect x="362" y="648.88" width="5.9" height="6.9" fill="#cfd5e1"/><rect x="370.8" y="648.88" width="6.1" height="6.9" fill="#cfd5e1"/><rect x="379.4" y="648.88" width="6.4" height="6.9" fill="#cfd5e1"/><rect x="362" y="657.78" width="15" height="13" fill="#cfd5e1"/><rect x="379.4" y="657.78" width="6.4" height="13" fill="#0fa84e"/></svg>
<div class="t" style="left:1077.7px;top:653.91px;font-size:17.5px;line-height:22px;color:#1b2038;letter-spacing:0.05px;">Personal</div>
<div class="t" style="left:1226px;top:653.91px;font-size:17.5px;line-height:22px;color:#1b2038;letter-spacing:0.05px;">Private</div>
<div class="t" style="left:1375px;top:653.91px;font-size:17.5px;line-height:22px;color:#1b2038;letter-spacing:0.55px;">19 Jun 2024</div>
<div class="t" style="left:1522.5px;top:653.91px;font-size:17.5px;line-height:22px;color:#1b2038;letter-spacing:0.55px;">19 Jun 2024</div>
<div style="position:absolute;left:322px;top:705.76px;width:1479px;height:1.5px;background:#e2e6ee"></div>
<div class="t" style="left:404.3px;top:727.42px;font-size:18px;line-height:22px;color:#1b2038;">Delete report</div>
<div class="t" style="left:404.3px;top:753.49px;font-size:15.5px;line-height:19px;color:#5b6b8c;letter-spacing:0.1px;">Report on tasks</div>
<svg style="position:absolute;left:355px;top:731.76px;" width="36" height="30" viewBox="355 731.76 36 30"><rect x="360.5" y="737.76" width="7.5" height="3.8" fill="#0fa84e"/><rect x="369.1" y="737.76" width="7.5" height="3.8" fill="#0fa84e"/><rect x="378.1" y="737.76" width="7.5" height="3.8" fill="#0fa84e"/><rect x="360.5" y="743.96" width="7.5" height="3.8" fill="#cfd5e1"/><rect x="369.1" y="743.96" width="7.5" height="3.8" fill="#cfd5e1"/><rect x="378.1" y="743.96" width="7.5" height="3.8" fill="#cfd5e1"/><rect x="360.5" y="750.46" width="7.5" height="3.8" fill="#cfd5e1"/><rect x="369.1" y="750.46" width="7.5" height="3.8" fill="#cfd5e1"/><rect x="378.1" y="750.46" width="7.5" height="3.8" fill="#cfd5e1"/></svg>
<div class="t" style="left:929.8px;top:739.62px;font-size:18px;line-height:22px;color:#1b2038;letter-spacing:-0.1px;">Me</div>
<div class="t" style="left:1077.7px;top:739.79px;font-size:17.5px;line-height:22px;color:#1b2038;letter-spacing:0.05px;">Waterfall Pr...</div>
<div class="t" style="left:1226px;top:739.79px;font-size:17.5px;line-height:22px;color:#1b2038;letter-spacing:0.05px;">Private</div>
<div class="t" style="left:1375px;top:739.79px;font-size:17.5px;line-height:22px;color:#1b2038;letter-spacing:0.55px;">17 Apr 2024</div>
<div class="t" style="left:1522.5px;top:739.79px;font-size:17.5px;line-height:22px;color:#1b2038;letter-spacing:0.55px;">17 Apr 2024</div>
<div style="position:absolute;left:322px;top:791.64px;width:1479px;height:1.5px;background:#e2e6ee"></div>
<div class="t" style="left:404.3px;top:813.30px;font-size:18px;line-height:22px;color:#1b2038;">Monthly Budget Report</div>
<div class="t" style="left:404.3px;top:839.37px;font-size:15.5px;line-height:19px;color:#5b6b8c;letter-spacing:0.1px;">Report on tasks</div>
<svg style="position:absolute;left:355px;top:817.64px;" width="36" height="30" viewBox="355 817.64 36 30"><rect x="360.5" y="823.64" width="7.5" height="3.8" fill="#0fa84e"/><rect x="369.1" y="823.64" width="7.5" height="3.8" fill="#0fa84e"/><rect x="378.1" y="823.64" width="7.5" height="3.8" fill="#0fa84e"/><rect x="360.5" y="829.84" width="7.5" height="3.8" fill="#cfd5e1"/><rect x="369.1" y="829.84" width="7.5" height="3.8" fill="#cfd5e1"/><rect x="378.1" y="829.84" width="7.5" height="3.8" fill="#cfd5e1"/><rect x="360.5" y="836.34" width="7.5" height="3.8" fill="#cfd5e1"/><rect x="369.1" y="836.34" width="7.5" height="3.8" fill="#cfd5e1"/><rect x="378.1" y="836.34" width="7.5" height="3.8" fill="#cfd5e1"/></svg>
<div class="t" style="left:929.8px;top:825.50px;font-size:18px;line-height:22px;color:#1b2038;letter-spacing:-0.1px;">Me</div>
<div class="t" style="left:1077.7px;top:825.67px;font-size:17.5px;line-height:22px;color:#1b2038;letter-spacing:0.05px;">Monthly Bud...</div>
<div class="t" style="left:1226px;top:825.67px;font-size:17.5px;line-height:22px;color:#1b2038;letter-spacing:0.05px;">Shared</div>
<div class="t" style="left:1375px;top:825.67px;font-size:17.5px;line-height:22px;color:#1b2038;letter-spacing:0.55px;">20 Feb 2024</div>
<div class="t" style="left:1522.5px;top:825.67px;font-size:17.5px;line-height:22px;color:#1b2038;letter-spacing:0.55px;">20 Feb 2024</div>
<div style="position:absolute;left:322px;top:877.52px;width:1479px;height:1.5px;background:#e2e6ee"></div>
<div class="t" style="left:404.3px;top:899.18px;font-size:18px;line-height:22px;color:#1b2038;">Project portfolio overview</div>
<div class="t" style="left:404.3px;top:925.25px;font-size:15.5px;line-height:19px;color:#5b6b8c;letter-spacing:0.1px;">Analytics board</div>
<svg style="position:absolute;left:355px;top:903.52px;" width="36" height="30" viewBox="355 903.52 36 30"><rect x="362" y="906.52" width="5.9" height="6.9" fill="#cfd5e1"/><rect x="370.8" y="906.52" width="6.1" height="6.9" fill="#cfd5e1"/><rect x="379.4" y="906.52" width="6.4" height="6.9" fill="#cfd5e1"/><rect x="362" y="915.42" width="15" height="13" fill="#cfd5e1"/><rect x="379.4" y="915.42" width="6.4" height="13" fill="#0fa84e"/></svg>
<div class="t" style="left:929.8px;top:911.38px;font-size:18px;line-height:22px;color:#1b2038;letter-spacing:-0.1px;">Me</div>
<div class="t" style="left:1077.7px;top:911.55px;font-size:17.5px;line-height:22px;color:#1b2038;letter-spacing:0.05px;">Knowledge ...</div>
<div class="t" style="left:1226px;top:911.55px;font-size:17.5px;line-height:22px;color:#1b2038;letter-spacing:0.05px;">Shared</div>
<div class="t" style="left:1375px;top:911.55px;font-size:17.5px;line-height:22px;color:#1b2038;letter-spacing:0.55px;">10 May 2024</div>
<div class="t" style="left:1522.5px;top:911.55px;font-size:17.5px;line-height:22px;color:#1b2038;letter-spacing:0.55px;">14 May 2024</div>
<div style="position:absolute;left:322px;top:963.4px;width:1479px;height:1.5px;background:#e2e6ee"></div>
<div class="t" style="left:404.3px;top:985.06px;font-size:18px;line-height:22px;color:#1b2038;">Repo</div>
<div class="t" style="left:404.3px;top:1011.13px;font-size:15.5px;line-height:19px;color:#5b6b8c;letter-spacing:0.1px;">Report on tasks</div>
<svg style="position:absolute;left:355px;top:989.4px;" width="36" height="30" viewBox="355 989.4 36 30"><rect x="360.5" y="995.4" width="7.5" height="3.8" fill="#0fa84e"/><rect x="369.1" y="995.4" width="7.5" height="3.8" fill="#0fa84e"/><rect x="378.1" y="995.4" width="7.5" height="3.8" fill="#0fa84e"/><rect x="360.5" y="1001.6" width="7.5" height="3.8" fill="#cfd5e1"/><rect x="369.1" y="1001.6" width="7.5" height="3.8" fill="#cfd5e1"/><rect x="378.1" y="1001.6" width="7.5" height="3.8" fill="#cfd5e1"/><rect x="360.5" y="1008.1" width="7.5" height="3.8" fill="#cfd5e1"/><rect x="369.1" y="1008.1" width="7.5" height="3.8" fill="#cfd5e1"/><rect x="378.1" y="1008.1" width="7.5" height="3.8" fill="#cfd5e1"/></svg>
<div class="t" style="left:929.8px;top:997.26px;font-size:18px;line-height:22px;color:#1b2038;letter-spacing:-0.1px;">Me</div>
<div class="t" style="left:1077.7px;top:997.43px;font-size:17.5px;line-height:22px;color:#1b2038;letter-spacing:0.05px;">Product Lau...</div>
<div class="t" style="left:1226px;top:997.43px;font-size:17.5px;line-height:22px;color:#1b2038;letter-spacing:0.05px;">Shared</div>
<div class="t" style="left:1375px;top:997.43px;font-size:17.5px;line-height:22px;color:#1b2038;letter-spacing:0.55px;">11 Apr 2024</div>
<div class="t" style="left:1522.5px;top:997.43px;font-size:17.5px;line-height:22px;color:#1b2038;letter-spacing:0.55px;">11 Apr 2024</div>
<div style="position:absolute;left:804.5px;top:582.3px;width:150.5px;height:106px;background:#fff;border-radius:12px;box-shadow:0 4px 18px rgba(40,50,90,0.16),0 1px 3px rgba(40,50,90,0.08)"></div>
<div class="t" style="left:836.8px;top:602.96px;font-size:18px;line-height:22px;color:#1b2038;">Duplicate</div>
<div class="t" style="left:836.8px;top:645.46px;font-size:18px;line-height:22px;color:#1b2038;">Delete</div>
<div style="position:absolute;left:817px;top:637px;width:107px;height:41px;border:5.5px solid #08cf65;border-radius:9px"></div>
<div style="position:absolute;left:753.3px;top:623.5999999999999px;width:66.4px;height:66.4px;border-radius:50%;background:rgba(8,207,101,0.2)"></div>
<div style="position:absolute;left:764.5px;top:633.5px;width:46.4px;height:46.4px;border-radius:50%;background:#08cf65"></div>
<div class="t" style="left:777.2px;top:640.09px;font-size:26px;line-height:32px;color:#fff;font-weight:700;width:21px;text-align:center;">2</div>
<div style="position:absolute;left:0px;top:0px;width:1802px;height:1px;background:#0e0e10"></div>
<div style="position:absolute;left:0px;top:0px;width:1px;height:1025px;background:#0e0e10"></div>
<div style="position:absolute;left:1801px;top:0px;width:1px;height:1025px;background:#0e0e10"></div>
<div style="position:absolute;left:0px;top:1024px;width:1802px;height:1px;background:#0e0e10"></div>
</body></html>
